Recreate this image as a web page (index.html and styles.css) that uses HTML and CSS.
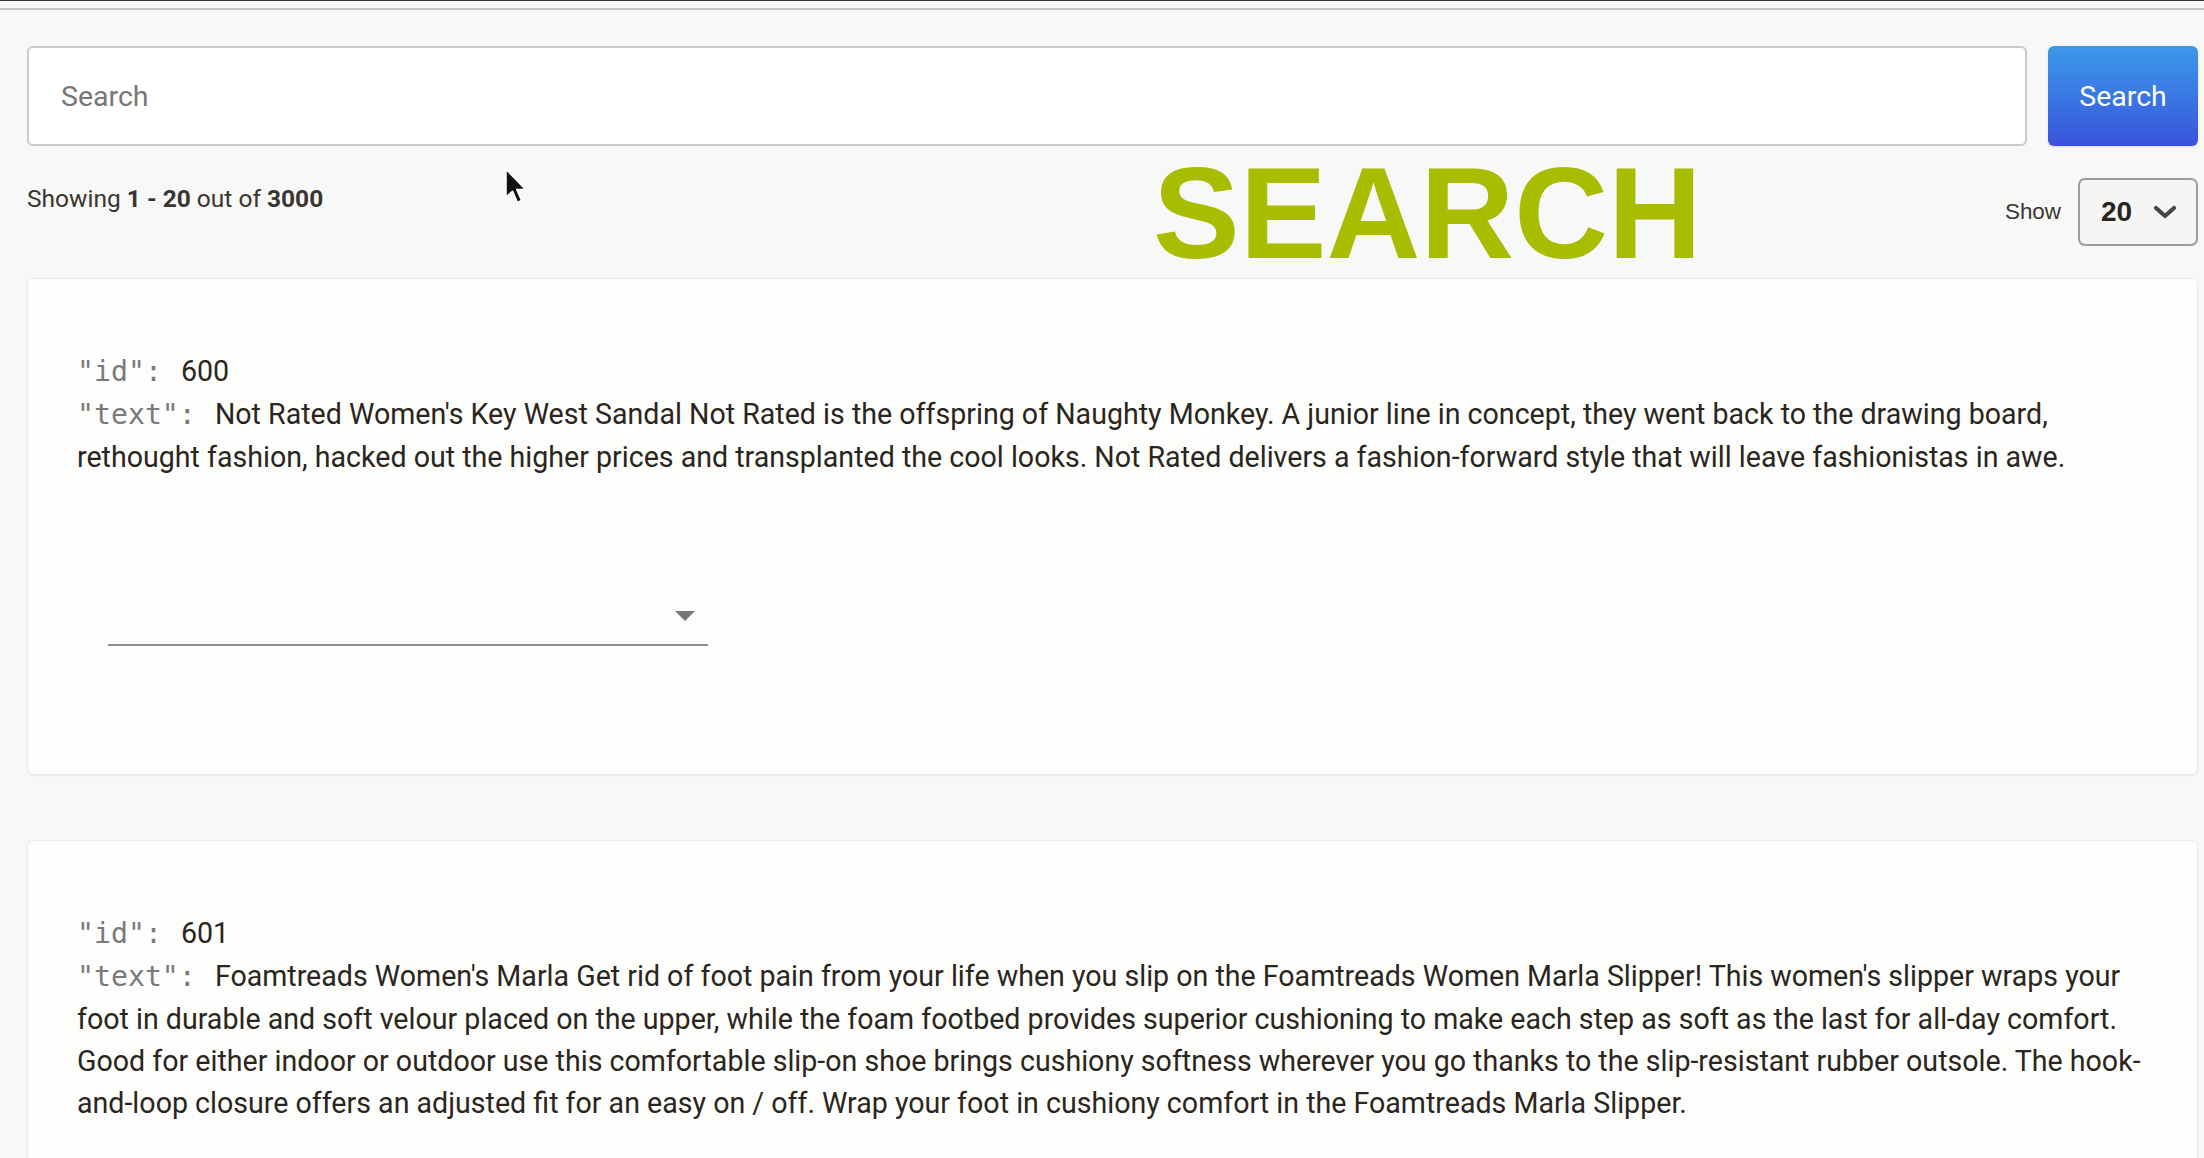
FILE: index.html
```html
<!DOCTYPE html>
<html lang="en">
<head>
<meta charset="utf-8">
<title>Search</title>
<link rel="stylesheet" href="styles.css">
</head>
<body>
<div class="topline"></div>
<main class="page">
  <div class="searchbar">
    <input class="search-input" type="text" placeholder="Search">
    <button class="search-btn" type="button">Search</button>
  </div>
  <div class="status-row">
    <div class="showing">Showing <b>1 - 20</b> out of <b>3000</b></div>
    <div class="brand">SEARCH</div>
    <div class="spacer"></div>
    <div class="show">
      <span class="show-label">Show</span>
      <div class="page-size">
        <span class="page-size-value">20</span>
        <svg class="chev" width="24" height="14" viewBox="0 0 24 14"><polyline points="3,3 12,11 21,3" fill="none" stroke="#444" stroke-width="4.2" stroke-linecap="round" stroke-linejoin="round"/></svg>
      </div>
    </div>
  </div>
  <section class="results">
    <article class="card">
      <div class="json">
        <div class="line"><span class="key">"id":</span> 600</div>
        <div class="line"><span class="key">"text":</span> Not Rated Women's Key West Sandal Not Rated is the offspring of Naughty Monkey. A junior line in concept, they went back to the drawing board, rethought fashion, hacked out the higher prices and transplanted the cool looks. Not Rated delivers a fashion-forward style that will leave fashionistas in awe.</div>
      </div>
      <div class="mselect"><span class="mselect-arrow"></span></div>
    </article>
    <article class="card">
      <div class="json">
        <div class="line"><span class="key">"id":</span> 601</div>
        <div class="line"><span class="key">"text":</span> Foamtreads Women's Marla Get rid of foot pain from your life when you slip on the Foamtreads Women Marla Slipper! This women's slipper wraps your foot in durable and soft velour placed on the upper, while the foam footbed provides superior cushioning to make each step as soft as the last for all-day comfort. Good for either indoor or outdoor use this comfortable slip-on shoe brings cushiony softness wherever you go thanks to the slip-resistant rubber outsole. The hook-and-loop closure offers an adjusted fit for an easy on / off. Wrap your foot in cushiony comfort in the Foamtreads Marla Slipper.</div>
      </div>
      <div class="mselect"><span class="mselect-arrow"></span></div>
    </article>
  </section>
</main>
<svg class="cursor" width="24" height="38" viewBox="0 0 13 20.5"><path d="M1,1 L1,16.5 L4.6,13.2 L7.2,19.2 L9.6,18.1 L7,12.2 L11.8,12.2 Z" fill="#111" stroke="#fff" stroke-width="1" stroke-linejoin="round"/></svg>
</body>
</html>
```

FILE: styles.css
```css
html, body {
  margin: 0;
  padding: 0;
}

body {
  background: #f7f8f7;
  font-family: Roboto, "Noto Sans", sans-serif;
  color: #2b2520;
  position: relative;
  overflow: hidden;
  height: 1158px;
}

.topline {
  height: 7px;
  border-top: 1px solid #343434;
  border-bottom: 2px solid #c6c7c5;
}

.page {
  padding: 36px 6px 0 27px;
}

.searchbar {
  display: flex;
  gap: 21px;
  height: 100px;
}

.search-input {
  flex: 1;
  box-sizing: border-box;
  height: 100px;
  border: 2px solid #cacbc9;
  border-radius: 6px;
  background: #fff;
  padding: 0 32px;
  font-family: Roboto, sans-serif;
  font-size: 28.5px;
  color: #333;
  outline: none;
}

.search-input::placeholder {
  color: #767676;
}

.search-btn {
  width: 150px;
  height: 100px;
  border: none;
  border-radius: 6px;
  background: linear-gradient(180deg, #3d98e8 0%, #3a7fe5 40%, #3a52dc 100%);
  color: #fff;
  font-family: Roboto, sans-serif;
  font-size: 28.5px;
  padding: 0;
  box-shadow: 0 1px 2px rgba(0, 0, 0, 0.12);
}

.status-row {
  display: grid;
  grid-template-columns: 1126px auto 1fr auto;
  height: 132px;
}

.showing {
  align-self: start;
  margin-top: 36px;
  font-size: 24.5px;
  line-height: 33px;
  color: #3a3530;
}

.showing b {
  font-weight: 700;
  color: #3a3530;
}

.brand {
  align-self: start;
  margin-top: 2px;
  font-family: "Liberation Sans", Arial, sans-serif;
  font-weight: 700;
  font-size: 130px;
  line-height: 130px;
  color: #a8bc00;
}

.show {
  align-self: center;
  display: flex;
  align-items: center;
  gap: 17px;
}

.show-label {
  font-family: "Liberation Sans", Arial, sans-serif;
  font-size: 22.4px;
  color: #3b3632;
}

.page-size {
  box-sizing: border-box;
  width: 120px;
  height: 68px;
  border: 2px solid #9c9c9b;
  border-radius: 7px;
  background: #f5f6f4;
  display: flex;
  align-items: center;
  padding: 0 19px 0 21px;
}

.page-size-value {
  font-family: "Liberation Sans", Arial, sans-serif;
  font-weight: 700;
  font-size: 28px;
  color: #262320;
}

.chev {
  margin-left: auto;
}

.results {
  display: flex;
  flex-direction: column;
  gap: 65px;
}

.card {
  background: #fdfefc;
  border: 1px solid #ebecea;
  border-radius: 6px;
  box-shadow: 0 1px 3px rgba(0, 0, 0, 0.05);
  padding: 71px 46px 128px 49px;
}

.json {
  font-size: 28.6px;
  line-height: 42px;
}

.key {
  font-family: "DejaVu Sans Mono", monospace;
  font-size: 28.2px;
  color: #7a7a78;
  margin-right: 12px;
}

.mselect {
  margin: 112px 0 0 31px;
  width: 600px;
  height: 56px;
  border-bottom: 2px solid #8e8e8d;
  display: flex;
  align-items: center;
  justify-content: flex-end;
  padding-right: 13px;
  box-sizing: border-box;
}

.mselect-arrow {
  width: 0;
  height: 0;
  border-left: 10px solid transparent;
  border-right: 10px solid transparent;
  border-top: 10px solid #767676;
  margin-top: -2px;
}

.cursor {
  position: absolute;
  left: 504px;
  top: 167px;
}
```
